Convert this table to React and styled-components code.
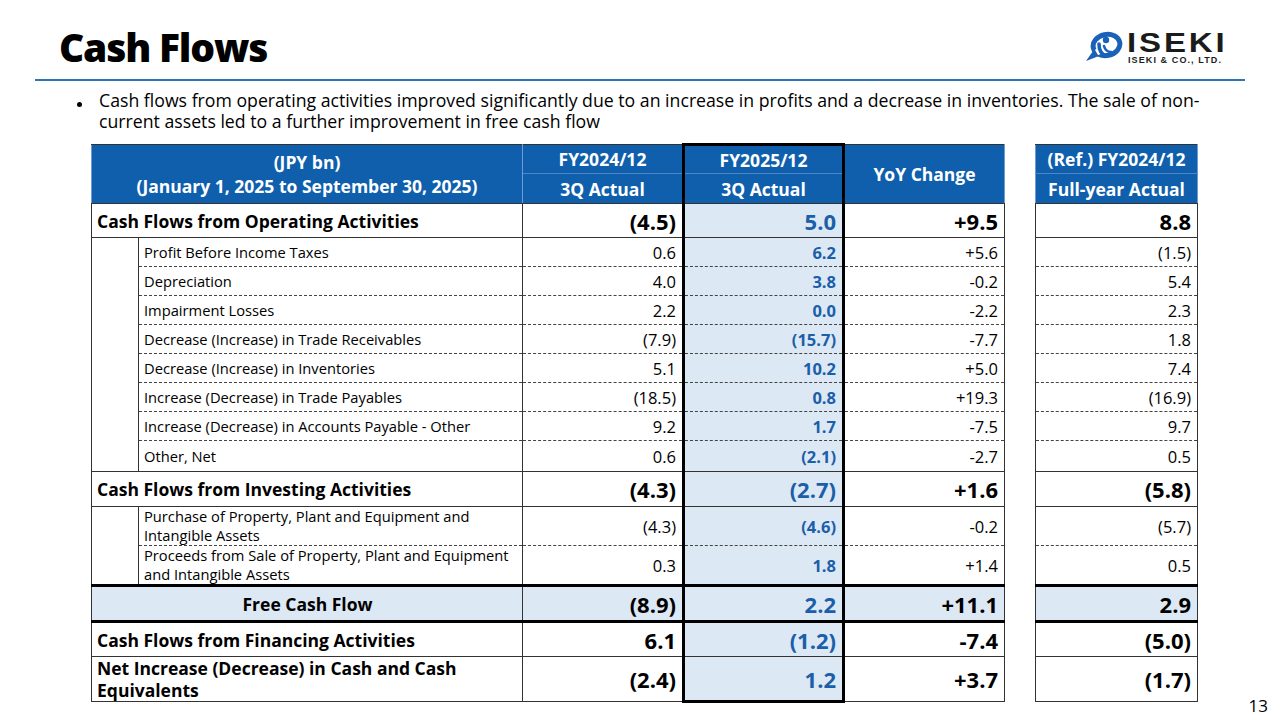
import React from "react";
import styled, { createGlobalStyle, css } from "styled-components";

const Global = createGlobalStyle`
  html, body { margin: 0; padding: 0; background: #fff; }
  body { font-family: "Open Sans", "Noto Sans", sans-serif; color: #000; }
`;

const BLUE = "#0f5fad";
const LIGHT = "#dde8f5";
const TEXTBLUE = "#1a5fa8";

const Page = styled.div`
  position: relative;
  width: 1280px;
  height: 720px;
  overflow: hidden;
  box-sizing: border-box;
`;

const Header = styled.header`
  display: flex;
  justify-content: space-between;
  align-items: flex-start;
  padding: 20px 57px 0 59px;
  height: 79px;
  box-sizing: border-box;
`;

const Title = styled.h1`
  margin: 0;
  font-family: "Open Sans", sans-serif;
  font-weight: 800;
  font-size: 39px;
  letter-spacing: -1.2px;
  line-height: 54px;
`;

const Logo = styled.div`
  display: flex;
  align-items: flex-start;
  gap: 4px;
  margin-top: 11px;
`;

const LogoText = styled.div`
  display: flex;
  flex-direction: column;
  align-items: flex-start;
  width: 96px;
  margin-top: 1px;
`;

const LogoBig = styled.div`
  font-family: "Liberation Sans", Arial, sans-serif;
  font-weight: 900;
  font-size: 28px;
  line-height: 21px;
  height: 21px;
  letter-spacing: 2.4px;
  color: #1b1b1b;
  transform: scaleX(1.18);
  transform-origin: left center;
  white-space: nowrap;
`;

const LogoSmall = styled.div`
  font-family: "Liberation Sans", Arial, sans-serif;
  font-weight: 700;
  font-size: 9px;
  line-height: 9px;
  color: #1b1b1b;
  margin-top: 3px;
  margin-left: 1px;
  letter-spacing: 1.1px;
  white-space: nowrap;
`;

const Rule = styled.hr`
  margin: 0 35px;
  border: 0;
  border-top: 2px solid #2f75b5;
`;

const Bullet = styled.ul`
  margin: 9px 0 0 0;
  padding: 0 0 0 99px;
  list-style: none;
  font-size: 17.7px;
  line-height: 21px;
  width: 1160px;
  position: relative;
`;

const BulletItem = styled.li`
  position: relative;
  white-space: nowrap;
  &::before {
    content: "";
    position: absolute;
    left: -22px;
    top: 12px;
    width: 5px;
    height: 5px;
    border-radius: 50%;
    background: #000;
  }
`;

const TableWrap = styled.div`
  padding: 11px 0 0 91px;
`;

const Table = styled.table`
  border-collapse: collapse;
  table-layout: fixed;
  width: 1106px;
`;

const Row = styled.tr`
  height: ${(p) => p.$h}px;
`;

const Th = styled.th`
  background: ${BLUE};
  color: #fff;
  font-weight: 700;
  font-size: 17.5px;
  line-height: 24px;
  padding: 0 4px;
  text-align: center;
  white-space: nowrap;
  border-left: 1px solid #6d9bd2;
  border-right: 1px solid #6d9bd2;
  border-bottom: ${(p) => (p.$split ? "1px solid #4f86c6" : "1px solid #333")};
  border-top: 1px solid #333;
  ${(p) =>
    p.$hl &&
    css`
      border-left: 3px solid #000;
      border-right: 3px solid #000;
    `}
  ${(p) =>
    p.$top &&
    css`
      border-top: 3px solid #000;
    `}
`;

const Gap = styled.td`
  border: none;
  background: #fff;
  padding: 0;
`;

const Indent = styled.td`
  border-left: 1px solid #333;
  border-right: 1px solid #333;
  padding: 0;
`;

const dashed = css`
  border-top: 1px dashed #444;
  border-bottom: 1px dashed #444;
`;

const Label = styled.td`
  border: 1px solid #333;
  ${(p) => p.$sub && dashed}
  padding: 0 4px 0 5px;
  text-align: ${(p) => (p.$center ? "center" : "left")};
  font-size: ${(p) => (p.$sub ? "14.7px" : "17.5px")};
  font-weight: ${(p) => (p.$sub ? 400 : 700)};
  line-height: ${(p) => (p.$sub ? "19px" : "22px")};
  background: ${(p) => (p.$fill ? LIGHT : "#fff")};
  vertical-align: middle;
  ${(p) =>
    p.$thick &&
    css`
      border-top: 3px solid #000;
      border-bottom: 3px solid #000;
    `}
`;

const Num = styled.td`
  border: 1px solid #333;
  ${(p) => p.$sub && dashed}
  padding: 0 6px 0 4px;
  text-align: right;
  font-size: ${(p) => (p.$sub ? "16.5px" : "22px")};
  font-weight: ${(p) => (p.$sub && !p.$hl ? 400 : 700)};
  color: ${(p) => (p.$hl ? TEXTBLUE : "#000")};
  background: ${(p) => (p.$hl || p.$fill ? LIGHT : "#fff")};
  vertical-align: middle;
  white-space: nowrap;
  ${(p) =>
    p.$hl &&
    css`
      border-left: 3px solid #000;
      border-right: 3px solid #000;
    `}
  ${(p) =>
    p.$thick &&
    css`
      border-top: 3px solid #000;
      border-bottom: 3px solid #000;
    `}
  ${(p) =>
    p.$last &&
    p.$hl &&
    css`
      border-bottom: 3px solid #000;
    `}
`;

const PageNo = styled.div`
  position: absolute;
  right: 12px;
  bottom: 3px;
  font-size: 17px;
  line-height: 22px;
`;

const Emblem = () => (
  <svg width="38" height="31" viewBox="0 0 38 31">
    <ellipse
      cx="21.5"
      cy="14"
      rx="13.5"
      ry="10.5"
      fill="none"
      stroke="#1a62b8"
      strokeWidth="5"
      transform="rotate(-12 21.5 14)"
    />
    <path d="M1 30 L8 20 L14 25 Z" fill="#1a62b8" />
    <path d="M10 19 L13 24 L16 23 L12 17 Z" fill="#ffffff" />
    <circle cx="21" cy="9" r="3.2" fill="#1a62b8" />
    <path
      d="M14 13 C14 19 16 23 21 25"
      fill="none"
      stroke="#1a62b8"
      strokeWidth="3.6"
      strokeLinecap="round"
    />
    <path
      d="M19 15 C20 19 23 21 26 21"
      fill="none"
      stroke="#1a62b8"
      strokeWidth="2.6"
      strokeLinecap="round"
    />
  </svg>
);

const subRows = [
  ["Profit Before Income Taxes", "0.6", "6.2", "+5.6", "(1.5)", 29],
  ["Depreciation", "4.0", "3.8", "-0.2", "5.4", 29],
  ["Impairment Losses", "2.2", "0.0", "-2.2", "2.3", 29],
  ["Decrease (Increase) in Trade Receivables", "(7.9)", "(15.7)", "-7.7", "1.8", 29],
  ["Decrease (Increase) in Inventories", "5.1", "10.2", "+5.0", "7.4", 29],
  ["Increase (Decrease) in Trade Payables", "(18.5)", "0.8", "+19.3", "(16.9)", 29],
  ["Increase (Decrease) in Accounts Payable - Other", "9.2", "1.7", "-7.5", "9.7", 29],
  ["Other, Net", "0.6", "(2.1)", "-2.7", "0.5", 31],
];

const invRows = [
  ["Purchase of Property, Plant and Equipment and Intangible Assets", "(4.3)", "(4.6)", "-0.2", "(5.7)", 38],
  ["Proceeds from Sale of Property, Plant and Equipment and Intangible Assets", "0.3", "1.8", "+1.4", "0.5", 38],
];

const SubRow = ({ r, indent }) => (
  <Row $h={r[5]}>
    {indent}
    <Label $sub>{r[0]}</Label>
    <Num $sub>{r[1]}</Num>
    <Num $sub $hl>{r[2]}</Num>
    <Num $sub>{r[3]}</Num>
    <Gap />
    <Num $sub>{r[4]}</Num>
  </Row>
);

const SectionRow = ({ label, v, h, last }) => (
  <Row $h={h}>
    <Label colSpan={2}>{label}</Label>
    <Num>{v[0]}</Num>
    <Num $hl $last={last}>{v[1]}</Num>
    <Num>{v[2]}</Num>
    <Gap />
    <Num>{v[3]}</Num>
  </Row>
);

export default function App() {
  return (
    <Page>
      <Global />
      <Header>
        <Title>Cash Flows</Title>
        <Logo>
          <Emblem />
          <LogoText>
            <LogoBig>ISEKI</LogoBig>
            <LogoSmall>ISEKI &amp; CO., LTD.</LogoSmall>
          </LogoText>
        </Logo>
      </Header>
      <Rule />
      <Bullet>
        <BulletItem>
          Cash flows from operating activities improved significantly due to an increase in profits and a decrease in inventories. The sale of non-
          <br />
          current assets led to a further improvement in free cash flow
        </BulletItem>
      </Bullet>
      <TableWrap>
        <Table>
          <colgroup>
            <col style={{ width: 47 }} />
            <col style={{ width: 384 }} />
            <col style={{ width: 161 }} />
            <col style={{ width: 160 }} />
            <col style={{ width: 161 }} />
            <col style={{ width: 31 }} />
            <col style={{ width: 162 }} />
          </colgroup>
          <tbody>
            <Row $h={29}>
              <Th colSpan={2} rowSpan={2}>
                (JPY bn)
                <br />
                (January 1, 2025 to September 30, 2025)
              </Th>
              <Th $split>FY2024/12</Th>
              <Th $split $hl $top>FY2025/12</Th>
              <Th rowSpan={2}>YoY Change</Th>
              <Gap />
              <Th $split>(Ref.) FY2024/12</Th>
            </Row>
            <Row $h={30}>
              <Th>3Q Actual</Th>
              <Th $hl>3Q Actual</Th>
              <Gap />
              <Th>Full-year Actual</Th>
            </Row>
            <SectionRow label="Cash Flows from Operating Activities" v={["(4.5)", "5.0", "+9.5", "8.8"]} h={34} />
            {subRows.map((r, i) => (
              <SubRow key={r[0]} r={r} indent={i === 0 ? <Indent rowSpan={subRows.length} /> : null} />
            ))}
            <SectionRow label="Cash Flows from Investing Activities" v={["(4.3)", "(2.7)", "+1.6", "(5.8)"]} h={35} />
            {invRows.map((r, i) => (
              <SubRow key={r[0]} r={r} indent={i === 0 ? <Indent rowSpan={invRows.length} /> : null} />
            ))}
            <Row $h={36}>
              <Label colSpan={2} $center $fill $thick>Free Cash Flow</Label>
              <Num $thick $fill>(8.9)</Num>
              <Num $thick $hl>2.2</Num>
              <Num $thick $fill>+11.1</Num>
              <Gap />
              <Num $thick $fill>2.9</Num>
            </Row>
            <SectionRow label="Cash Flows from Financing Activities" v={["6.1", "(1.2)", "-7.4", "(5.0)"]} h={35} />
            <SectionRow
              label="Net Increase (Decrease) in Cash and Cash Equivalents"
              v={["(2.4)", "1.2", "+3.7", "(1.7)"]}
              h={44}
              last
            />
          </tbody>
        </Table>
      </TableWrap>
      <PageNo>13</PageNo>
    </Page>
  );
}
